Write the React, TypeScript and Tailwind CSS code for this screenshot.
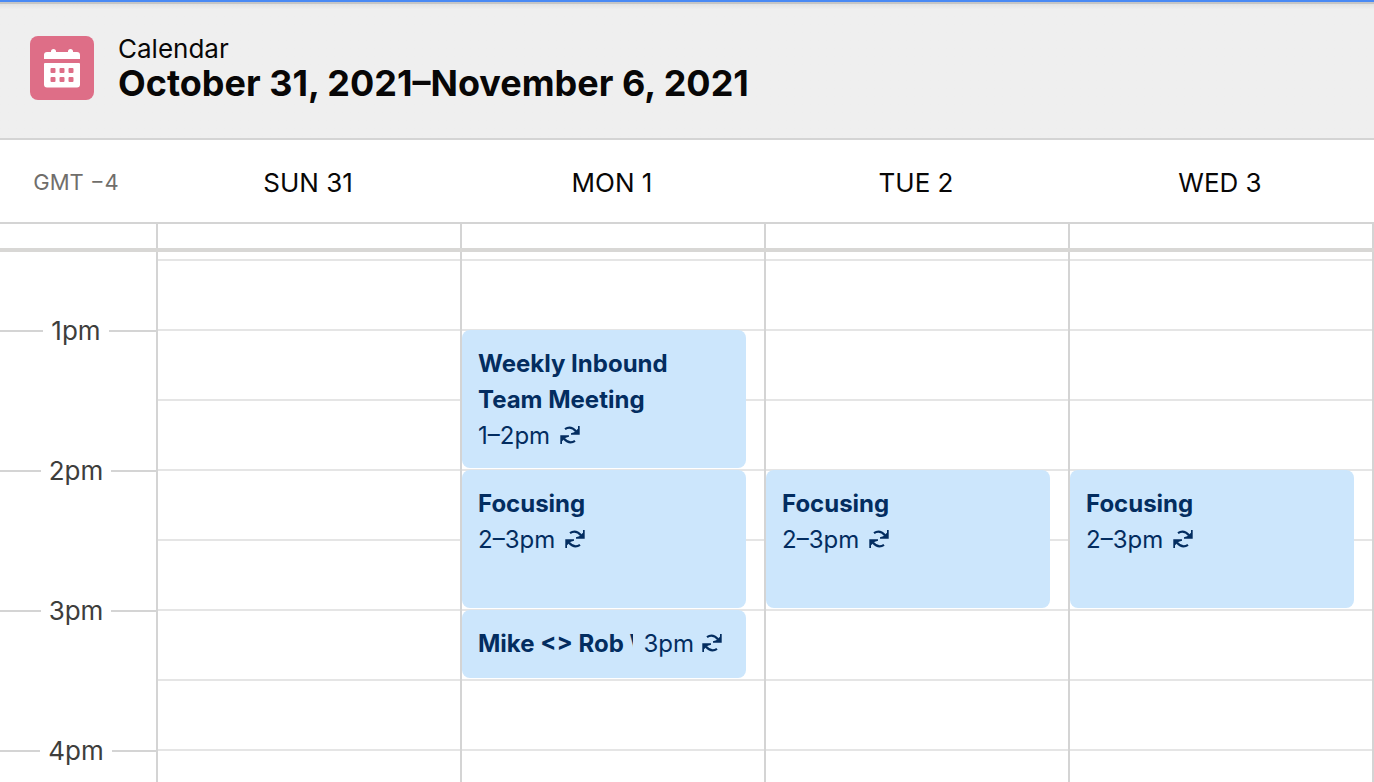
import React from "react";

interface CalendarEvent {
  title: string;
  time: string;
  // half-hour row the event starts on, and how many rows it covers
  row: number;
  span: number;
  compact?: boolean;
}

interface Day {
  label: string;
  events: CalendarEvent[];
}

const focusing: CalendarEvent = {
  title: "Focusing",
  time: "2–3pm",
  row: 5,
  span: 2,
};

const days: Day[] = [
  { label: "SUN 31", events: [] },
  {
    label: "MON 1",
    events: [
      { title: "Weekly Inbound Team Meeting", time: "1–2pm", row: 3, span: 2 },
      focusing,
      {
        title: "Mike <> Rob W",
        time: "3pm",
        row: 7,
        span: 1,
        compact: true,
      },
    ],
  },
  { label: "TUE 2", events: [focusing] },
  { label: "WED 3", events: [focusing] },
];

const hours = ["1pm", "2pm", "3pm", "4pm"];
const slots = [2, 3, 4, 5, 6, 7, 8, 9];

function CalendarIcon() {
  return (
    <span className="flex size-16 shrink-0 items-center justify-center rounded-lg bg-[#de6e87]">
      <svg viewBox="0 0 64 64" className="size-16" fill="white" aria-hidden="true">
        <path d="M17 16h4v-.5a2.500 2.500 0 0 1 5 0v.5h12v-.5a2.500 2.500 0 0 1 5 0v.5h4a3 3 0 0 1 3 3v4H14v-4a3 3 0 0 1 3-3z" />
        <path
          fillRule="evenodd"
          d="M15 27h34a1 1 0 0 1 1 1v20.500a3 3 0 0 1-3 3H17a3 3 0 0 1-3-3V28a1 1 0 0 1 1-1zM21.500 32a1 1 0 0 0-1 1v3a1 1 0 0 0 1 1h3a1 1 0 0 0 1-1v-3a1 1 0 0 0-1-1zM30.500 32a1 1 0 0 0-1 1v3a1 1 0 0 0 1 1h3a1 1 0 0 0 1-1v-3a1 1 0 0 0-1-1zM39.500 32a1 1 0 0 0-1 1v3a1 1 0 0 0 1 1h3a1 1 0 0 0 1-1v-3a1 1 0 0 0-1-1zM21.500 41a1 1 0 0 0-1 1v3a1 1 0 0 0 1 1h3a1 1 0 0 0 1-1v-3a1 1 0 0 0-1-1zM30.500 41a1 1 0 0 0-1 1v3a1 1 0 0 0 1 1h3a1 1 0 0 0 1-1v-3a1 1 0 0 0-1-1zM39.500 41a1 1 0 0 0-1 1v3a1 1 0 0 0 1 1h3a1 1 0 0 0 1-1v-3a1 1 0 0 0-1-1z"
        />
      </svg>
    </span>
  );
}

function RepeatIcon() {
  return (
    <svg viewBox="0 0 20 20" className="mb-0.5 size-5 shrink-0" aria-hidden="true">
      <g fill="none" stroke="currentColor" strokeWidth="2.200">
        <path d="M5 4.200C8.500 1.800 12.500 2.400 16 6.200" />
        <path d="M15 15.800C11.500 18.200 7.500 17.600 4 13.800" />
      </g>
      <path
        fill="currentColor"
        d="M18 1h1.700v8.700H11V8.200l3.200-1L18 3.800zM2 19H.3v-8.700H9v1.500l-3.200 1L2 16.200z"
      />
    </svg>
  );
}

function EventCard({ event }: { event: CalendarEvent }) {
  return (
    <a
      href="#"
      className="z-10 col-start-1 my-px mr-4.5 block overflow-hidden rounded-lg bg-[#cce6fc] px-4 py-4 text-2xl/9 text-[#032d60]"
      style={{ gridRow: `${event.row} / span ${event.span}` }}
    >
      {event.compact ? (
        <span className="flex gap-2.5 pr-2">
          <span className="min-w-0 flex-1 overflow-hidden font-bold whitespace-nowrap">
            {event.title}
          </span>
          <span className="flex items-center gap-2">
            {event.time} <RepeatIcon />
          </span>
        </span>
      ) : (
        <>
          <span className="block font-bold">{event.title}</span>
          <span className="flex items-center gap-2.5">
            {event.time} <RepeatIcon />
          </span>
        </>
      )}
    </a>
  );
}

function TimeColumn() {
  return (
    <div className="w-[158px] shrink-0 border-r-2 border-[#d4d4d4] pt-[9px]">
      {hours.map((hour) => (
        <div key={hour} className="flex h-35 items-center">
          <span className="h-0.5 grow basis-0 bg-[#d4d4d4]" />
          <span className="px-2 pb-0.5 text-[26px] text-[#3e3e3c]">{hour}</span>
          <span className="h-0.5 grow basis-1 bg-[#d4d4d4]" />
        </div>
      ))}
    </div>
  );
}

function DayColumn({ day }: { day: Day }) {
  return (
    <div className="grid min-w-0 flex-1 grid-cols-1 grid-rows-[7px_repeat(8,70px)] border-r-2 border-[#d4d4d4]">
      {slots.map((slot) => (
        <div
          key={slot}
          className="col-start-1 border-t-2 border-[#e5e5e5]"
          style={{ gridRow: slot }}
        />
      ))}
      {day.events.map((event) => (
        <EventCard key={event.row} event={event} />
      ))}
    </div>
  );
}

export default function App() {
  return (
    <div className="flex h-screen flex-col overflow-hidden bg-white font-[Inter,sans-serif] text-[#080707]">
      <div className="h-0.5 shrink-0 bg-[#4a8af4]" />
      <header className="shrink-0 border-t-2 border-b-2 border-t-[#c6c6c6] border-b-[#d4d4d4] bg-[#efefef] bg-linear-to-b from-[#e2e2e2] to-[#efefef] to-4% px-[30px] pt-8 pb-[34px]">
        <div className="flex h-17 items-start gap-6">
          <CalendarIcon />
          <div className="-mt-px">
            <p className="text-[26px]/7">Calendar</p>
            <h1 className="text-4xl/10 font-bold">
              October 31, 2021–November 6, 2021
            </h1>
          </div>
        </div>
      </header>

      <div className="flex h-21 shrink-0 items-center border-b-2 border-[#d4d4d4] pt-0.5 pr-0.5">
        <div className="w-39 shrink-0 pr-1 text-center text-[22px] text-[#706e6b]">
          GMT −4
        </div>
        {days.map((day) => (
          <div key={day.label} className="flex-1 text-center text-[26px]">
            {day.label}
          </div>
        ))}
      </div>

      {/* All-day row */}
      <div className="flex h-7 shrink-0 border-b-4 border-[#d8d7d5]">
        <div className="w-[158px] shrink-0 border-r-2 border-[#d4d4d4]" />
        {days.map((day) => (
          <div key={day.label} className="flex-1 border-r-2 border-[#d4d4d4]" />
        ))}
      </div>

      <main className="flex min-h-0 flex-1 overflow-hidden">
        <TimeColumn />
        {days.map((day) => (
          <DayColumn key={day.label} day={day} />
        ))}
      </main>
    </div>
  );
}
